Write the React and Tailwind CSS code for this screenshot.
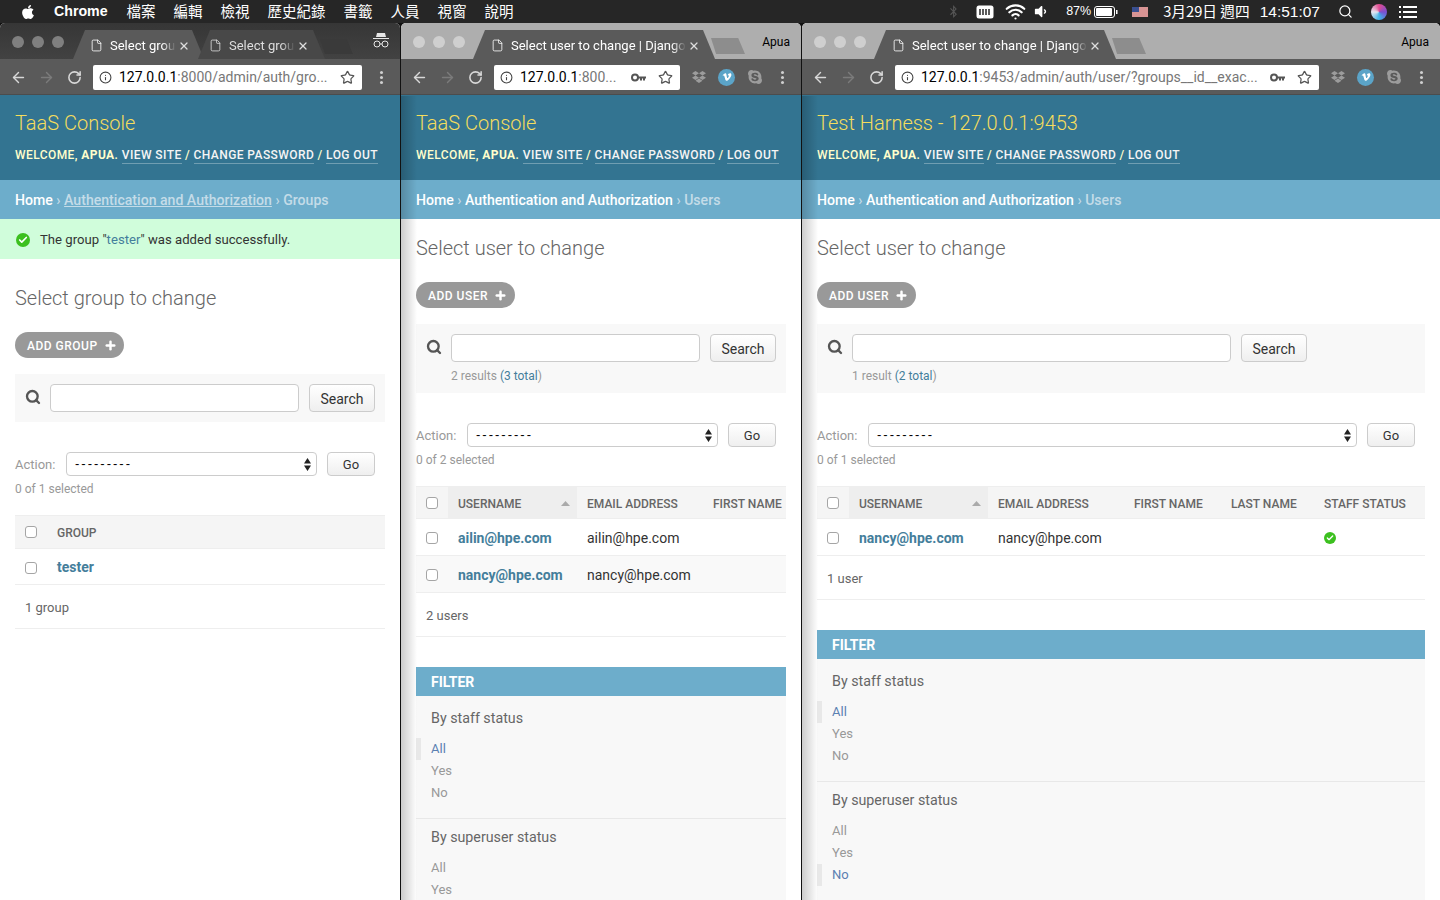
import { ArrowLeft, ArrowRight, RotateCw, Info, Star, File, Search, X, Plus, Check, Wifi } from "lucide-react";
import { FaApple, FaBluetoothB, FaVolumeDown, FaDropbox, FaVimeoV, FaSkype } from "react-icons/fa";

const menuItems = ["檔案", "編輯", "檢視", "歷史紀錄", "書籤", "人員", "視窗", "說明"];

function KeyIcon() {
  return (
    <svg width="15" height="9" viewBox="0 0 15 9" className="shrink-0">
      <circle cx="4" cy="4.5" r="3" fill="none" stroke="#555" strokeWidth="2" />
      <path d="M7 3.5h8v2h-1v2h-2v-2h-1v2H9v-2H7z" fill="#555" />
    </svg>
  );
}

function MenuBar() {
  return (
    <div className="h-[23px] shrink-0 bg-[#262626] flex items-center text-white text-[14.5px] [font-family:'Noto_Sans_CJK_TC','Liberation_Sans',sans-serif]">
      <FaApple size={16} className="ml-[20px]" />
      <span className="ml-[18px] text-[14.2px] font-bold [font-family:'Liberation_Sans',sans-serif]">Chrome</span>
      <div className="ml-[19px] mt-[-2px] flex gap-[18px]">
        {menuItems.map((m) => (
          <span key={m}>{m}</span>
        ))}
      </div>
      <div className="ml-auto flex items-center">
        <FaBluetoothB size={13} className="text-[#555] mr-[16px]" />
        <svg width="18" height="14" viewBox="0 0 18 14" className="mr-[11px]">
          <rect x="0.5" y="0.5" width="17" height="13" rx="2.5" fill="#fff" />
          <path d="M4 4v6M7 4v6M10 4v6M13 4v6" stroke="#262626" strokeWidth="1.5" />
        </svg>
        <Wifi size={21} strokeWidth={2.5} className="mr-[7px]" />
        <FaVolumeDown size={15} className="mr-[18px]" />
        <span className="w-[24px] whitespace-nowrap text-[12.5px] font-medium [font-family:'Liberation_Sans',sans-serif]">87%</span>
        <svg width="24" height="12" viewBox="0 0 24 12" className="ml-[4px] mr-[14px]">
          <rect x="0.5" y="0.5" width="20" height="11" rx="2.5" fill="none" stroke="#fff" />
          <rect x="2" y="2" width="16" height="8" rx="1" fill="#fff" />
          <rect x="22" y="4" width="1.5" height="4" fill="#fff" />
        </svg>
        <svg width="16" height="10" viewBox="0 0 16 10" className="mr-[15px]">
          <rect width="16" height="10" fill="#eee" />
          <path d="M0 1h16M0 3h16M0 5h16M0 7h16M0 9h16" stroke="#c23b3b" />
          <rect width="7" height="5" fill="#3a4f8f" />
        </svg>
        <span className="text-[14.7px] whitespace-nowrap">3月29日 週四</span>
        <span className="ml-[10px] text-[15.5px] [font-family:'Liberation_Sans',sans-serif]">14:51:07</span>
        <Search size={15} strokeWidth={2} className="ml-[18px]" />
        <div className="ml-[18px] w-[16px] h-[16px] rounded-full bg-[conic-gradient(#e24a8f,#7a4fd0,#3fb5e8,#e6e6f0,#e24a8f)]" />
        <div className="ml-[12px] mr-[23px] w-[18px] flex flex-col gap-[3px]">
          <div className="flex gap-[2px]"><span className="w-[2px] h-[2px] bg-white" /><span className="h-[2px] flex-1 bg-white" /></div>
          <div className="flex gap-[2px]"><span className="w-[2px] h-[2px] bg-white" /><span className="h-[2px] flex-1 bg-white" /></div>
          <div className="flex gap-[2px]"><span className="w-[2px] h-[2px] bg-white" /><span className="h-[2px] flex-1 bg-white" /></div>
        </div>
      </div>
    </div>
  );
}

function Tab({ title, w, active, pad }) {
  const fill = active ? "bg-[#5a5a5a]" : "bg-[#484848]";
  return (
    <div className={`h-[29px] pt-[2px] flex items-center shrink-0 [clip-path:polygon(0_100%,12px_0,calc(100%-12px)_0,100%_100%)] ${fill} ${pad}`} style={{ width: w }}>
      <File size={13} strokeWidth={1.5} className={active ? "text-white shrink-0" : "text-[#ddd] shrink-0"} />
      <span className={`ml-[7px] flex-1 overflow-hidden whitespace-nowrap text-[13px] [mask-image:linear-gradient(to_left,transparent,black_14px)] ${active ? "text-white" : "text-[#ddd]"}`}>
        {title}
      </span>
      <X size={12} strokeWidth={2.5} className="ml-[2px] shrink-0 text-[#ddd]" />
    </div>
  );
}

function NavBar({ host, rest, keyIcon, extensions }) {
  return (
    <div className="h-[36px] pt-[1px] shrink-0 bg-[#5a5a5a] flex items-center pl-[10px] pr-[17px] border-b border-[#4c4c4c]">
      <ArrowLeft size={17} strokeWidth={2} className="text-[#d8d8d8] shrink-0" />
      <ArrowRight size={17} strokeWidth={2} className="ml-[11px] text-[#7b7b7b] shrink-0" />
      <RotateCw size={15} strokeWidth={2.5} className="ml-[12px] text-[#d8d8d8] shrink-0" />
      <div className="ml-[11px] flex-1 min-w-0 h-[25px] bg-white rounded-[2px] flex items-center pl-[6px] pr-[7px]">
        <Info size={13} strokeWidth={2} className="text-[#444] shrink-0" />
        <span className="ml-[7px] flex-1 min-w-0 overflow-hidden whitespace-nowrap text-[14px] text-[#777]">
          <span className="text-black">{host}</span>
          {rest}
        </span>
        {keyIcon && <span className="ml-[8px]"><KeyIcon /></span>}
        <Star size={15} strokeWidth={2} className="ml-[12px] text-[#555] shrink-0" />
      </div>
      {extensions && (
        <div className="flex items-center ml-[12px] gap-[12px]">
          <FaDropbox size={14} className="text-[#9c9c9c]" />
          <span className="w-[17px] h-[17px] rounded-full bg-[#5ba4c8] flex items-center justify-center">
            <FaVimeoV size={10} className="text-white" />
          </span>
          <FaSkype size={16} className="text-[#9c9c9c]" />
        </div>
      )}
      <div className="ml-[18px] flex flex-col gap-[2px] shrink-0">
        <span className="w-[3px] h-[3px] rounded-full bg-[#cfcfcf]" />
        <span className="w-[3px] h-[3px] rounded-full bg-[#cfcfcf]" />
        <span className="w-[3px] h-[3px] rounded-full bg-[#cfcfcf]" />
      </div>
    </div>
  );
}

function Dots({ color }) {
  return (
    <div className="flex gap-[8px] pl-[12px] shrink-0 mt-[1px]">
      <span className={`w-[12px] h-[12px] rounded-full ${color}`} />
      <span className={`w-[12px] h-[12px] rounded-full ${color}`} />
      <span className={`w-[12px] h-[12px] rounded-full ${color}`} />
    </div>
  );
}

function Checkbox() {
  return <span className="block w-[12px] h-[12px] rounded-[3px] border border-[#a5a5a5] bg-white shrink-0" />;
}

function SiteHeader({ title }) {
  return (
    <div className="h-[85px] shrink-0 bg-[#337491] px-[15px] pt-[14px] overflow-hidden whitespace-nowrap">
      <div className="text-[20px] leading-[28px] font-light text-[#f5dd5d]">{title}</div>
      <div className="mt-[10px] text-[12px] leading-[16px] font-medium tracking-[0.42px] uppercase text-[#ffffcc]">
        Welcome, <strong className="font-bold">Apua</strong>.{" "}
        <span className="text-[#f5f5f5] border-b border-white/30 inline-block">View site</span>
        {" / "}
        <span className="text-[#f5f5f5] border-b border-white/30 inline-block">Change password</span>
        {" / "}
        <span className="text-[#f5f5f5] border-b border-white/30 inline-block">Log out</span>
      </div>
    </div>
  );
}

function Crumbs({ section, sectionLink, page }) {
  return (
    <div className="h-[39px] pt-[2px] shrink-0 bg-[#6dadcb] px-[15px] flex items-center whitespace-nowrap text-[14.1px] font-medium text-[#c4dce8]">
      <span className="text-white">Home</span>
      <span className="mx-[3.5px]">›</span>
      <span className={sectionLink ? "underline" : "text-white"}>{section}</span>
      <span className="mx-[3.5px]">›</span>
      <span>{page}</span>
    </div>
  );
}

function SearchPanel({ inputW, note }) {
  return (
    <div className={`mt-[16px] bg-[#f8f8f8] pl-[10px] pt-[10px] ${note ? "h-[69px]" : "h-[48px]"}`}>
      <div className="flex items-center">
        <Search size={16} strokeWidth={3.5} className="text-[#555] shrink-0 mt-[-2px]" />
        <div className="ml-[9px] h-[28px] bg-white border border-[#cccccc] rounded-[4px] shrink-0" style={{ width: inputW }} />
        <div className="ml-[10px] w-[66px] h-[28px] pt-[2px] rounded-[4px] border border-[#cccccc] bg-gradient-to-b from-white to-[#efefef] text-[14px] text-[#333] flex items-center justify-center shrink-0">
          Search
        </div>
      </div>
      {note && (
        <div className="mt-[6px] ml-[25px] text-[12px] leading-[16px] text-[#999]">
          {note[0]} <span className="text-[#447e9b]">{note[1]}</span>
          {note[2]}
        </div>
      )}
    </div>
  );
}

function Actions({ selectW, count, top }) {
  return (
    <div className={top}>
      <div className="flex items-center h-[24px]">
        <span className="w-[51px] pt-[2px] shrink-0 text-[13px] text-[#999]">Action:</span>
        <div className="h-[24px] bg-white border border-[#cccccc] rounded-[4px] flex items-center pl-[8px] pr-[5px] shrink-0" style={{ width: selectW }}>
          <span className="text-[13px] text-black tracking-[2px] [font-family:'Liberation_Sans',sans-serif]">---------</span>
          <svg width="7" height="13" viewBox="0 0 7 13" className="ml-auto">
            <path d="M3.5 0L7 5.5H0zM3.5 13L0 7.5h7z" fill="#222" />
          </svg>
        </div>
        <div className="ml-[10px] w-[48px] h-[24px] pt-[2px] rounded-[4px] border border-[#cccccc] bg-gradient-to-b from-white to-[#efefef] text-[13px] text-[#333] flex items-center justify-center shrink-0">
          Go
        </div>
      </div>
      <div className="mt-[3px] text-[12px] leading-[20px] text-[#999]">{count}</div>
    </div>
  );
}

function Th({ w, children, sorted }) {
  return (
    <div className={`h-full pt-[2px] flex items-center pl-[10px] shrink-0 text-[12px] font-medium uppercase text-[#666] whitespace-nowrap ${sorted ? "bg-[#eeeeee]" : ""}`} style={{ width: w }}>
      {children}
      {sorted && (
        <svg width="9" height="5" viewBox="0 0 9 5" className="ml-auto mr-[7px]">
          <path d="M4.5 0L9 5H0z" fill="#aaa" />
        </svg>
      )}
    </div>
  );
}

function CheckCircle({ size }) {
  return (
    <span className="rounded-full bg-[#3cc01f] flex items-center justify-center" style={{ width: size + 2, height: size + 2 }}>
      <Check size={size - 2} strokeWidth={4} className="text-white" />
    </span>
  );
}

function Row({ name, email, staff, stripe, columns }) {
  return (
    <div className={`h-[37px] pt-[2px] flex items-center border-b border-[#eeeeee] ${stripe ? "bg-[#f9f9f9]" : "bg-white"}`}>
      <div className="w-[32px] pl-[10px] shrink-0"><Checkbox /></div>
      <div className="pl-[10px] shrink-0 text-[14px] font-bold text-[#447e9b] whitespace-nowrap" style={{ width: columns[0] }}>{name}</div>
      <div className="pl-[10px] shrink-0 text-[14px] text-[#333] whitespace-nowrap" style={{ width: columns[1] + columns[2] + columns[3] }}>{email}</div>
      {staff && <div className="pl-[10px]"><CheckCircle size={10} /></div>}
    </div>
  );
}

function Footer({ text }) {
  return <div className="h-[44px] pt-[3px] flex items-center pl-[10px] text-[13px] text-[#666] border-b border-[#eeeeee]">{text}</div>;
}

function FilterGroup({ title, items, selected, border }) {
  return (
    <div className={`px-[15px] ${border ? "border-t border-[#e8e8e8] pt-[7px] pb-[15px]" : "pt-[11px] pb-[14px]"}`}>
      <div className="text-[14.25px] leading-[22px] text-[#666]">{title}</div>
      <div className="mt-[9px]">
        {items.map((it) => (
          <div key={it} className="relative h-[22px] flex items-center text-[13px]">
            {it === selected && <span className="absolute left-[-15px] top-0 w-[5px] h-[22px] bg-[#e8e8e8]" />}
            <span className={it === selected ? "text-[#5b80b2]" : "text-[#999]"}>{it}</span>
          </div>
        ))}
      </div>
    </div>
  );
}

function Filter({ superSelected, top }) {
  return (
    <div className={`${top} bg-[#f8f8f8]`}>
      <div className="h-[29px] pt-[2px] bg-[#6dadcb] pl-[15px] flex items-center text-[14px] font-bold uppercase text-white">Filter</div>
      <FilterGroup title="By staff status" items={["All", "Yes", "No"]} selected="All" />
      <FilterGroup title="By superuser status" items={["All", "Yes", "No"]} selected={superSelected} border />
    </div>
  );
}

function Shell({ children, tabStrip, shadow, className }) {
  return (
    <div className={`relative h-[877px] rounded-t-[5px] overflow-hidden flex flex-col bg-white [font-family:Roboto,'Liberation_Sans',sans-serif] ${className}`}>
      {tabStrip}
      {children}
      {shadow && <div className="absolute left-0 top-[73px] bottom-0 w-[16px] bg-gradient-to-r from-black/20 to-transparent pointer-events-none" />}
    </div>
  );
}

function LightStrip({ title }) {
  return (
    <div className="h-[36px] shrink-0 bg-[#aeaeae] flex items-end">
      <div className="self-center"><Dots color="bg-[#cfcfcf]" /></div>
      <div className="ml-[8px]"><Tab title={title} w={242} active pad="pl-[18px] pr-[15px]" /></div>
      <div className="ml-[-4px] mb-[5px] w-[34px] h-[16px] bg-[#8d8d8d] [clip-path:polygon(0_0,80%_0,100%_100%,15%_100%)]" />
      <span className="ml-auto mr-[11px] self-center mt-[1px] text-[12px] text-black">Apua</span>
    </div>
  );
}

function DarkStrip() {
  return (
    <div className="h-[36px] shrink-0 bg-gradient-to-b from-[#363636] to-[#424242] flex items-end">
      <div className="self-center"><Dots color="bg-[#7f7f7f]" /></div>
      <div className="ml-[9px]"><Tab title="Select grou" w={131} active pad="pl-[17px] pr-[14px]" /></div>
      <div className="ml-[-6px]"><Tab title="Select grou" w={127} pad="pl-[11px] pr-[16px]" /></div>
      <div className="ml-[-5px] mb-[5px] w-[33px] h-[15px] bg-[#3a3a3a] [clip-path:polygon(0_0,80%_0,100%_100%,15%_100%)]" />
      <svg width="18" height="18" viewBox="0 0 18 18" className="ml-auto mr-[10px] self-center">
        <path d="M5 1h8l1 4H4zM1 6h16v1H1z" fill="#e6e6e6" />
        <circle cx="5" cy="12" r="3" fill="none" stroke="#e6e6e6" />
        <circle cx="13" cy="12" r="3" fill="none" stroke="#e6e6e6" />
        <path d="M8 12h2" stroke="#e6e6e6" />
      </svg>
    </div>
  );
}

function AddButton({ label, w }) {
  return (
    <div className="mt-[20px] h-[26px] pt-[2px] rounded-full bg-[#999999] flex items-center pl-[12px] text-[12px] font-medium uppercase tracking-[0.5px] text-white" style={{ width: w }}>
      {label}
      <Plus size={13} strokeWidth={4.5} className="ml-[6px] mt-[-2px]" />
    </div>
  );
}

function GroupsWindow() {
  return (
    <Shell className="w-[400px] shrink-0" tabStrip={<DarkStrip />}>
      <NavBar host="127.0.0.1" rest=":8000/admin/auth/gro..." />
      <SiteHeader title="TaaS Console" />
      <Crumbs section="Authentication and Authorization" sectionLink page="Groups" />
      <div className="h-[40px] pt-[2px] shrink-0 bg-[#d0fddb] pl-[16px] flex items-center text-[13.15px] text-[#333]">
        <CheckCircle size={12} />
        <span className="ml-[10px]">The group "<span className="text-[#447e9b]">tester</span>" was added successfully.</span>
      </div>
      <div className="px-[15px]">
        <h1 className="mt-[25px] text-[20px] leading-[28px] font-light text-[#666]">Select group to change</h1>
        <AddButton label="Add group" w={109} />
        <SearchPanel inputW={249} />
        <Actions selectW={251} count="0 of 1 selected" top="mt-[30px]" />
        <div className="mt-[16px] h-[34px] bg-[#f5f5f5] border-y border-[#eeeeee] flex items-center">
          <div className="w-[32px] pl-[10px] shrink-0"><Checkbox /></div>
          <Th w={200}>Group</Th>
        </div>
        <div className="h-[36px] pt-[2px] flex items-center border-b border-[#eeeeee]">
          <div className="w-[32px] pl-[10px] shrink-0"><Checkbox /></div>
          <div className="pl-[10px] text-[14px] font-bold text-[#447e9b]">tester</div>
        </div>
        <Footer text="1 group" />
      </div>
    </Shell>
  );
}

function UsersWindow({ width, host, rest, site, inputW, selectW, note, count, columns, extraHeads, rows, footer, superSelected }) {
  return (
    <Shell className="shrink-0" shadow tabStrip={<LightStrip title="Select user to change | Django" />}>
      <div style={{ width }} className="flex flex-col flex-1 min-h-0">
        <NavBar host={host} rest={rest} keyIcon extensions />
        <SiteHeader title={site} />
        <Crumbs section="Authentication and Authorization" page="Users" />
        <div className="px-[15px]">
          <h1 className="mt-[15px] text-[20px] leading-[28px] font-light text-[#666]">Select user to change</h1>
          <AddButton label="Add user" w={99} />
          <SearchPanel inputW={inputW} note={note} />
          <Actions selectW={selectW} count={count} top="mt-[30px]" />
          <div className="mt-[16px] overflow-hidden">
            <div className="h-[33px] bg-[#f5f5f5] border-y border-[#eeeeee] flex items-center">
              <div className="w-[32px] pl-[10px] shrink-0"><Checkbox /></div>
              <Th w={columns[0]} sorted>Username</Th>
              <Th w={columns[1]}>Email address</Th>
              <Th w={columns[2]}>First name</Th>
              {extraHeads.map((h, i) => (
                <Th key={h} w={columns[3 + i]}>{h}</Th>
              ))}
            </div>
            {rows.map((r, i) => (
              <Row key={r.name} {...r} stripe={i % 2 === 1} columns={columns} />
            ))}
            <Footer text={footer} />
          </div>
          <Filter superSelected={superSelected} top="mt-[30px]" />
        </div>
      </div>
    </Shell>
  );
}

export default function App() {
  return (
    <div className="w-[1440px] h-[900px] overflow-hidden bg-[#111] flex flex-col">
      <MenuBar />
      <div className="flex gap-[1px]">
        <GroupsWindow />
        <UsersWindow
          width={400}
          host="127.0.0.1"
          rest=":800..."
          site="TaaS Console"
          inputW={249}
          selectW={251}
          note={["2 results", "(3 total", ")"]}
          count="0 of 2 selected"
          columns={[129, 126, 120, 0]}
          extraHeads={[]}
          rows={[
            { name: "ailin@hpe.com", email: "ailin@hpe.com" },
            { name: "nancy@hpe.com", email: "nancy@hpe.com" },
          ]}
          footer="2 users"
          superSelected="None"
        />
        <UsersWindow
          width={638}
          host="127.0.0.1"
          rest=":9453/admin/auth/user/?groups__id__exac..."
          site="Test Harness - 127.0.0.1:9453"
          inputW={379}
          selectW={489}
          note={["1 result", "(2 total", ")"]}
          count="0 of 1 selected"
          columns={[139, 136, 97, 93, 110]}
          extraHeads={["Last name", "Staff status"]}
          rows={[{ name: "nancy@hpe.com", email: "nancy@hpe.com", staff: true }]}
          footer="1 user"
          superSelected="No"
        />
      </div>
    </div>
  );
}
